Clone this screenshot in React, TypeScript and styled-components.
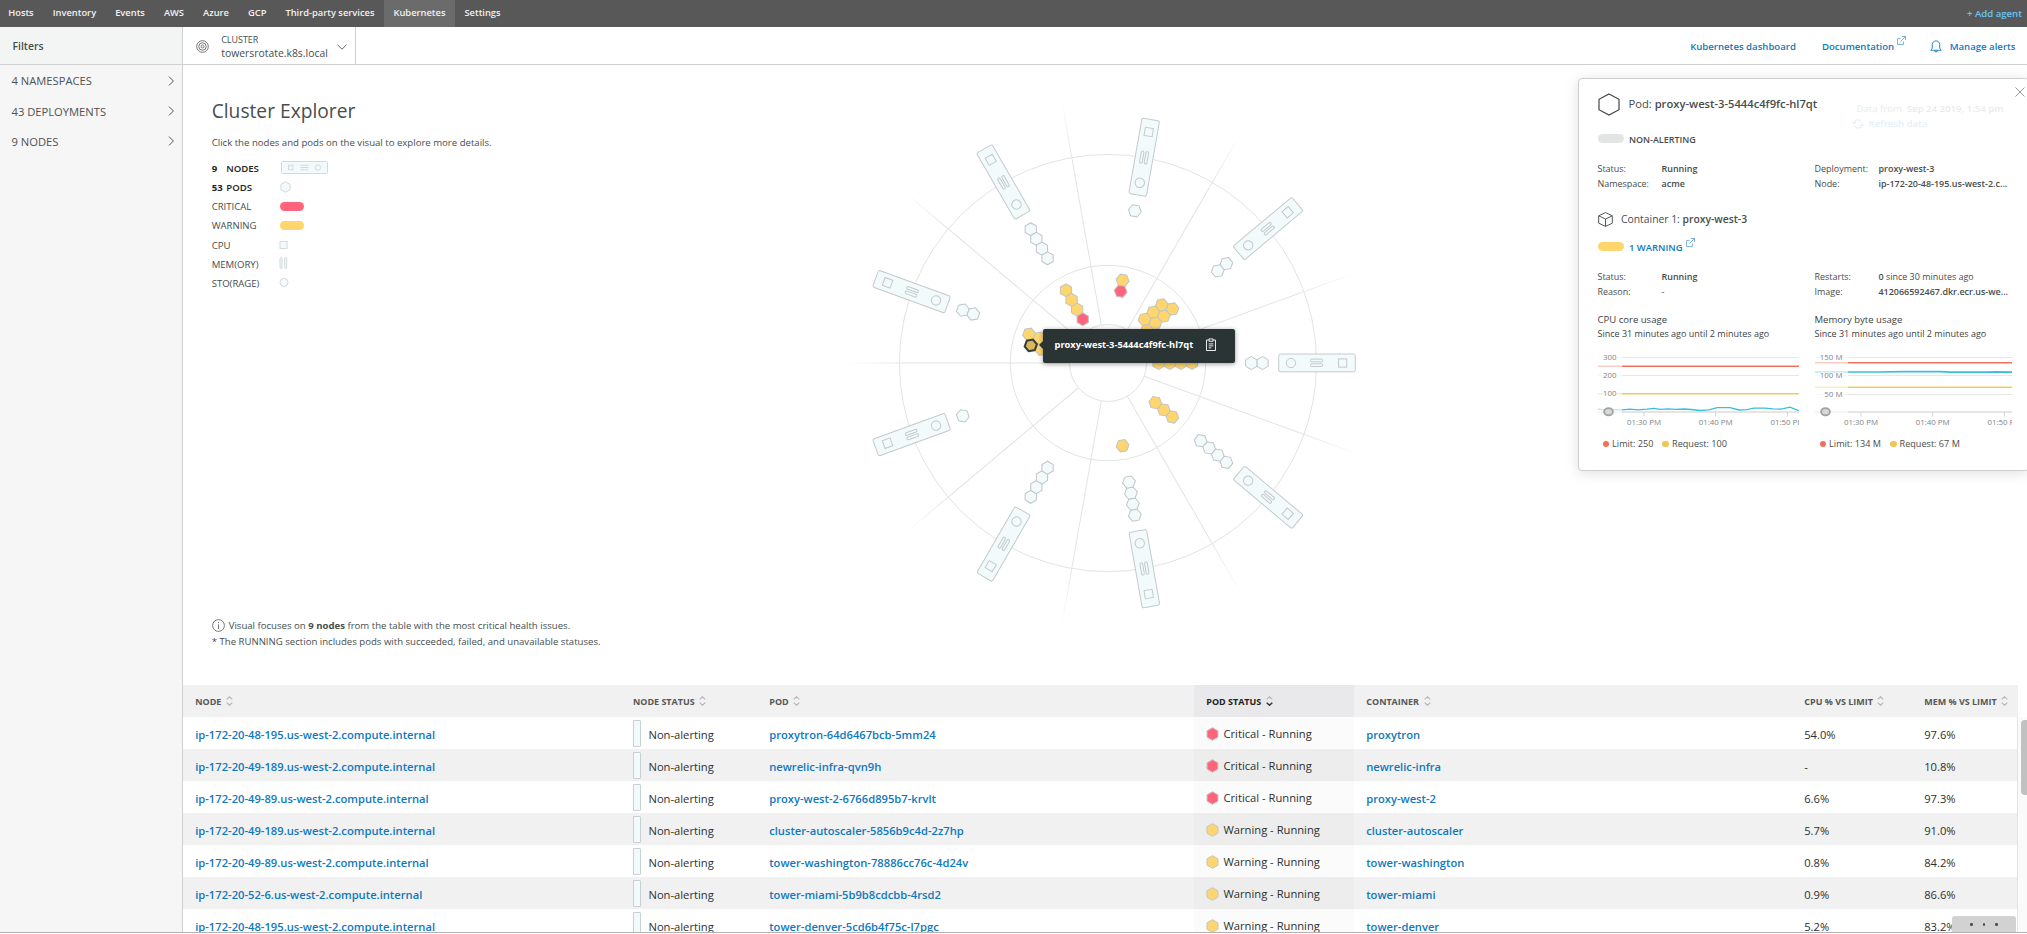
import React from 'react';
import styled, { createGlobalStyle } from 'styled-components';

const GlobalStyle = createGlobalStyle`
  * { box-sizing: border-box; }
  body {
    margin: 0;
    background: #fff;
    color: #464e4e;
    font-family: "Open Sans", sans-serif;
    font-size: 9.6px;
    overflow: hidden;
  }
`;

const LINK = '#0f78bd';
const YELLOW = '#ffd66e';
const RED = '#ff647c';
const SHELL = '#f3fafc';

const Page = styled.div`
  display: flex;
  flex-direction: column;
  width: 2027px;
  height: 933px;
  border-bottom: 1px solid #b2b2b2;
  overflow: hidden;
`;

/* ---------- top navigation ---------- */

const TopNav = styled.nav`
  display: flex;
  flex: none;
  height: 27px;
  background: #585858;
`;

const NavItem = styled.a<{ $active?: boolean }>`
  padding: 0 9.5px 2px;
  line-height: 25px;
  font-size: 9.33px;
  font-weight: 600;
  color: #f2f2f2;
  background: ${(p) => (p.$active ? '#6b6b6b' : 'transparent')};

  &:first-child {
    padding-left: 8.2px;
  }
`;

const AddAgent = styled.a`
  margin-left: auto;
  padding-right: 5px;
  line-height: 27px;
  font-weight: 600;
  color: #6ac4f0;
`;

/* ---------- shell ---------- */

const Shell = styled.div`
  display: flex;
  flex: 1;
  min-height: 0;
`;

const Sidebar = styled.aside`
  flex: none;
  width: 183px;
  background: #f6f6f6;
  border-right: 1px solid #cfcfcf;
`;

const FilterTitle = styled.div`
  height: 38px;
  padding: 1px 0 0 12.5px;
  line-height: 36px;
  font-size: 10.4px;
  font-weight: 600;
  background: #f3f5f5;
  border-bottom: 1px solid #cfcfcf;
`;

const FilterRow = styled.div`
  display: flex;
  align-items: center;
  justify-content: space-between;
  height: 30.4px;
  padding: 1px 7px 0 11.5px;
  font-size: 11.2px;
  color: #4f5252;
`;

const Main = styled.main`
  display: flex;
  flex-direction: column;
  flex: 1;
  min-width: 0;
`;

const SubHeader = styled.header`
  display: flex;
  align-items: center;
  flex: none;
  height: 38px;
  padding-right: 11.5px;
  border-bottom: 1px solid #cfcfcf;
`;

const ClusterPicker = styled.div`
  display: flex;
  align-items: center;
  width: 173px;
  height: 37px;
  padding: 2px 8px 0 12.5px;
  border-right: 1px solid #cfcfcf;
`;

const ClusterText = styled.div`
  flex: 1;
  margin-left: 12.7px;
  line-height: 13.6px;
  font-size: 10.4px;
  white-space: nowrap;
`;

const ClusterLabel = styled.div`
  font-size: 8.95px;
`;

const HeaderLink = styled.a<{ $gap?: number }>`
  display: flex;
  align-items: center;
  margin-left: ${(p) => p.$gap ?? 26}px;
  padding-top: 2px;
  font-weight: 600;
  color: ${LINK};
`;

const Push = styled.div`
  flex: 1;
`;

const HeaderIcon = styled.svg<{ $lift?: number; $left?: number; $right?: number }>`
  flex: none;
  overflow: visible;
  margin: 0 ${(p) => p.$right ?? 0}px ${(p) => p.$lift ?? 0}px ${(p) => p.$left ?? 0}px;
`;

/* ---------- explorer ---------- */

const Explorer = styled.section`
  display: flex;
  flex: none;
  position: relative;
  height: 620px;
`;

const Intro = styled.div`
  display: flex;
  flex-direction: column;
  width: 640px;
  padding: 32px 0 0 28.7px;
`;

const Title = styled.h1`
  margin: 0;
  line-height: 28px;
  font-size: 19.2px;
  font-weight: 400;
`;

const Hint = styled.p`
  margin: 10.5px 0 9px;
  line-height: 14px;
`;

const LegendRow = styled.div<{ $strong?: boolean; $gap?: number }>`
  display: flex;
  align-items: center;
  height: 19px;
  margin-top: ${(p) => p.$gap ?? 0}px;
  font-weight: ${(p) => (p.$strong ? 600 : 400)};
  color: ${(p) => (p.$strong ? '#1c2424' : '#464e4e')};
  letter-spacing: -0.03px;
`;

const LegendCount = styled.span`
  width: 14.6px;
  font-weight: 700;
`;

const LegendName = styled.span<{ $short?: boolean }>`
  width: ${(p) => (p.$short ? 52.9 : 67.5)}px;
`;

const LegendPill = styled.i<{ $color: string }>`
  width: 24px;
  height: 9px;
  margin-left: 1px;
  border-radius: 5px;
  background: ${(p) => p.$color};
`;

const Notes = styled.div`
  margin-top: 325px;
  line-height: 16px;
`;

const NoteLine = styled.div`
  display: flex;
  align-items: center;
  white-space: pre;
`;

const Canvas = styled.div`
  position: relative;
  width: 570px;
  height: 560px;
`;

const Tooltip = styled.div`
  position: absolute;
  left: 220px;
  top: 264px;
  display: flex;
  align-items: center;
  width: 192px;
  height: 34px;
  padding: 0 0 3px 11.5px;
  border-radius: 2px;
  background: #2a3434;
  box-shadow: 0 1px 5px rgba(0, 0, 0, 0.4);
  color: #fff;
  font-size: 9.3px;
  font-weight: 700;

  &::before {
    content: '';
    position: absolute;
    left: -4.5px;
    top: 12px;
    border: 4.5px solid transparent;
    border-left: 0;
    border-right-color: #2a3434;
  }
`;

/* ---------- pod panel ---------- */

const Panel = styled.aside`
  position: absolute;
  right: -2px;
  top: 12.5px;
  width: 451px;
  height: 393px;
  padding: 4.5px 0 0 18.5px;
  border: 1px solid #cfcfcf;
  border-radius: 4px;
  background: #fff;
  box-shadow: 0 2px 14px rgba(0, 0, 0, 0.13);
  font-size: 8.96px;
  color: #484c4c;
`;

const PanelHead = styled.div`
  display: flex;
  align-items: center;
  height: 42px;
  font-size: 11.2px;
`;

const PanelTitle = styled.div`
  margin: -1px 0 0 9px;
  width: 228px;
  white-space: nowrap;
`;

const Fresh = styled.div`
  align-self: flex-start;
  padding-top: 18px;
  font-size: 9.6px;
  line-height: 15px;
  color: #e9ecec;
  white-space: nowrap;
`;

const Refresh = styled.div`
  display: flex;
  align-items: center;
  margin-left: -5px;
  font-weight: 600;
  color: #e5f1f9;
`;

const CloseIcon = styled.svg`
  position: absolute;
  right: 2px;
  top: 7px;
`;

const Badge = styled.div<{ $top: number; $color?: string }>`
  display: flex;
  align-items: center;
  height: 15px;
  margin-top: ${(p) => p.$top}px;
  font-weight: 600;
  color: ${(p) => p.$color ?? 'inherit'};
`;

const BadgePill = styled.i<{ $color: string }>`
  width: 26px;
  height: 9.5px;
  margin: -2px 5.5px 0 0;
  border-radius: 5px;
  background: ${(p) => p.$color};
`;

const Facts = styled.div<{ $top: number }>`
  display: grid;
  grid-template-columns: 64px 153px 64px 136px;
  grid-auto-rows: 15px;
  margin-top: ${(p) => p.$top}px;
  line-height: 15px;
  white-space: nowrap;

  b {
    font-weight: 600;
  }
`;

const ContainerLine = styled.div`
  display: flex;
  align-items: center;
  height: 16px;
  margin-top: 20px;
  font-size: 10.35px;
  white-space: pre;

  svg {
    margin: 2px 8.5px 0 0;
  }
  b {
    font-weight: 600;
  }
`;

const Strong = styled.b`
  font-weight: 600;
`;

const WarningText = styled.span`
  font-size: 9.45px;
`;

const Charts = styled.div`
  display: grid;
  grid-template-columns: 217px 201px;
  margin-top: 14px;
`;

const ChartTitle = styled.div<{ $size: number }>`
  line-height: 14.5px;
  font-size: ${(p) => p.$size}px;
  color: #3c4242;
`;

const ChartSvg = styled.svg`
  display: block;
  margin-top: 8.5px;
  font-size: 7.9px;
`;

const Keys = styled.div`
  display: flex;
  gap: 9px;
  margin: 8.5px 0 0 5px;
  line-height: 14px;
  font-size: 9.1px;
`;

const Key = styled.span<{ $color: string }>`
  display: flex;
  align-items: center;

  &::before {
    content: '';
    width: 6.6px;
    height: 6.6px;
    margin-right: 3px;
    border-radius: 50%;
    background: ${(p) => p.$color};
  }
`;

/* ---------- table ---------- */

const TableArea = styled.section`
  display: flex;
  flex: 1;
  min-height: 0;
  position: relative;
`;

const Table = styled.div`
  width: 1835px;
`;

const Row = styled.div<{ $head?: boolean; $odd?: boolean }>`
  display: grid;
  grid-template-columns: 437.7px 136.3px 437px 160px 438px 120px 106px;
  height: 32px;
  background: ${(p) => (p.$head || p.$odd ? '#f1f1f1' : '#fff')};
`;

const Cell = styled.div<{ $link?: boolean; $sorted?: boolean; $raise?: boolean }>`
  display: flex;
  align-items: center;
  padding: ${(p) => (p.$raise ? 1 : 3)}px 0 0 12.2px;
  white-space: nowrap;
  font-size: 11.2px;
  font-weight: ${(p) => (p.$link ? 600 : 400)};
  color: ${(p) => (p.$link ? LINK : '#2b3030')};
  background: ${(p) => (p.$sorted ? 'rgba(0, 0, 0, 0.016)' : 'transparent')};
`;

const HeadCell = styled.div<{ $sorted?: boolean }>`
  display: flex;
  align-items: center;
  padding-left: 12.3px;
  font-size: 8.98px;
  font-weight: 700;
  color: ${(p) => (p.$sorted ? '#222' : '#545757')};
  background: ${(p) => (p.$sorted ? '#e9e9eb' : 'transparent')};

  svg {
    margin-left: 4.5px;
  }
`;

const NodeChip = styled.i`
  width: 8px;
  height: 27px;
  margin: -2px 7.6px 0 0;
  border: 1px solid #c9d0d2;
  border-radius: 1px;
  background: ${SHELL};
`;

const HexIcon = styled.svg`
  flex: none;
  margin-right: 4.3px;
`;

const Scrollbar = styled.div`
  flex: 1;
  display: flex;
  justify-content: flex-end;
  margin: 32px 0 0 -1px;
  padding-top: 3px;
  border-left: 1px solid #e4e4e4;
  background: #fafafa;
`;

const Thumb = styled.div`
  width: 6px;
  height: 75px;
  border-radius: 4px 0 0 4px;
  background: #c1c1c1;
`;

const More = styled.div`
  position: absolute;
  right: 11px;
  bottom: 0;
  display: flex;
  justify-content: center;
  gap: 9.6px;
  width: 64px;
  height: 16px;
  padding-top: 7.4px;
  border-radius: 3px 3px 0 0;
  background: #d2d2d2;
`;

const Dot = styled.i`
  width: 2.7px;
  height: 2.7px;
  border-radius: 50%;
  background: #505050;
`;

/* ---------- drawings ---------- */

const hexPoints = (cx: number, cy: number, r: number) =>
  [-90, -30, 30, 90, 150, 210]
    .map((a) => `${(cx + r * Math.cos((a * Math.PI) / 180)).toFixed(2)},${(cy + r * Math.sin((a * Math.PI) / 180)).toFixed(2)}`)
    .join(' ');

const Hex = ({ x, y, fill, r = 6.5 }: { x: number; y: number; fill: string; r?: number }) => (
  <polygon points={hexPoints(x, y, r)} fill={fill} stroke="#c0c5c6" strokeWidth="1" />
);

const ExternalIcon = ({ lift, left }: { lift: number; left: number }) => (
  <HeaderIcon $lift={lift} $left={left} width="9" height="9" viewBox="0 0 9 9" fill="none" stroke={LINK} strokeWidth="0.7" opacity="0.8">
    <path d="M3.6 2.6H.6v6h5.8V5.4M5 .5h3.5V4M8.5.5 3.6 5.4" />
  </HeaderIcon>
);

const ChevronRight = () => (
  <svg width="7" height="10" viewBox="0 0 7 10" fill="none" stroke="#555" strokeWidth="1">
    <path d="M1 .6 5.4 5 1 9.4" />
  </svg>
);

const Sort = ({ active }: { active?: boolean }) => (
  <svg width="7" height="10" viewBox="0 0 7 10" fill="none" stroke="#b4b4b4" strokeWidth="1.1">
    <path d="M.7 3.3 3.5.8l2.8 2.5" />
    <path d="M.7 6.7 3.5 9.2l2.8-2.5" stroke={active ? '#333' : '#b4b4b4'} strokeWidth={active ? 1.5 : 1.1} />
  </svg>
);

type Spoke = { angle: number; outer: number; inner: string; second?: string };

/* inner: colours of the alerting pods from the outside in; second: the neighbouring row */
const spokes: Spoke[] = [
  { angle: 0, outer: 2, inner: 'yyyy' },
  { angle: 40, outer: 2, inner: 'yyyy', second: 'yyy' },
  { angle: 80, outer: 1, inner: 'yr' },
  { angle: 120, outer: 4, inner: 'yyyr' },
  { angle: 160, outer: 2, inner: 'yy', second: 'yy' },
  { angle: 200, outer: 1, inner: '' },
  { angle: 240, outer: 4, inner: '' },
  { angle: 280, outer: 4, inner: 'y' },
  { angle: 320, outer: 4, inner: 'yyy' },
];

const tone = (c: string) => (c === 'r' ? RED : YELLOW);

const NodeSpoke = ({ angle, outer, inner, second = '' }: Spoke) => (
  <g transform={`rotate(${-angle})`}>
    <g fill={SHELL} stroke="#c4cacb" strokeWidth="1">
      <rect x="170.7" y="-9" width="76.6" height="17.8" rx="1.8" />
      <circle cx="183" cy="0" r="4.7" />
      <rect x="202.6" y="-3.9" width="12.2" height="2.7" rx="1.3" />
      <rect x="202.6" y="0.8" width="12.2" height="2.7" rx="1.3" />
      <rect x="230.5" y="-4.1" width="8.2" height="8.2" />
    </g>
    {Array.from({ length: outer }, (_, i) => (
      <Hex key={i} x={154.5 - 11.2 * i} y={0} fill={SHELL} />
    ))}
    {inner.split('').map((c, i) => (
      <Hex key={i} x={84 - 11.15 * i} y={0} fill={tone(c)} />
    ))}
    {second.split('').map((c, i) => (
      <Hex key={i} x={78.4 - 11.15 * i} y={-9.9} fill={tone(c)} />
    ))}
  </g>
);

const Radial = () => (
  <svg width="570" height="560" viewBox="823 65 570 560">
    <defs>
      <linearGradient id="fade" gradientUnits="userSpaceOnUse" x1="38" y1="0" x2="266" y2="0">
        <stop offset="0" stopColor="#e2e3e3" />
        <stop offset="0.72" stopColor="#e2e3e3" />
        <stop offset="1" stopColor="#e2e3e3" stopOpacity="0" />
      </linearGradient>
    </defs>
    <g transform="translate(1108 363)" fill="none" stroke="#e2e3e3">
      <circle r="208.6" />
      <circle r="97.7" />
      <circle r="38.5" />
      {spokes.map((s) => (
        <g key={s.angle} transform={`rotate(${-s.angle - 20})`}>
          <path d="M38.5 0H268V.01" stroke="url(#fade)" />
        </g>
      ))}
      {spokes.map((s) => (
        <NodeSpoke key={s.angle} {...s} />
      ))}
      <polygon
        points={hexPoints(0, 0, 6.2)}
        transform="translate(-77.2 -17.6) rotate(20)"
        fill="#dcb757"
        stroke="#37403f"
        strokeWidth="2.1"
      />
    </g>
  </svg>
);

type ChartProps = {
  id: string;
  width: number;
  split: number;
  labelEnd: number;
  grid: [number, string][];
  limit: number;
  request: number;
  line: string;
  thick: number;
  first: number;
};

const Chart = ({ id, width, split, labelEnd, grid, limit, request, line, thick, first }: ChartProps) => {
  const lines = (
    <g fill="none">
      {grid.map(([y]) => (
        <path key={y} d={`M0 ${y}H${width}`} stroke="#e6e7e7" />
      ))}
      <path d={`M0 62H${width}`} stroke="#cbcbcb" strokeWidth="1.2" />
      <path d={`M0 ${limit}H${width}`} stroke="#f5705c" strokeWidth="1.4" />
      <path d={`M0 ${request}H${width}`} stroke="#f2c960" strokeWidth="1.4" />
      <path d={line} stroke="#38bfdf" strokeWidth={thick} />
    </g>
  );
  return (
    <ChartSvg width={width} height="78" viewBox={`0 0 ${width} 78`}>
      <clipPath id={`${id}-a`}>
        <rect width={split} height="78" />
      </clipPath>
      <clipPath id={`${id}-b`}>
        <rect x={split} width={width} height="78" />
      </clipPath>
      <g clipPath={`url(#${id}-a)`} opacity="0.35">{lines}</g>
      <g clipPath={`url(#${id}-b)`}>{lines}</g>
      <g stroke="#fff" strokeWidth="2" strokeOpacity="0.8" paintOrder="stroke" fill="#80858a" textAnchor="end">
        {grid.map(([y, label]) => (
          <text key={y} x={labelEnd} y={y + 2.7}>{label}</text>
        ))}
      </g>
      <ellipse cx="10.5" cy="61.8" rx="4.4" ry="3.6" fill="#d8d8d8" stroke="#a0a0a0" strokeWidth="1.8" />
      <g fill="#80858a" textAnchor="middle">
        {['01:30 PM', '01:40 PM', '01:50 PM'].map((t, i) => (
          <g key={t}>
            <path d={`M${first + i * 71.7} 62v4.5`} stroke="#d3d3d3" />
            <text x={first + i * 71.7} y="75">{t}</text>
          </g>
        ))}
      </g>
    </ChartSvg>
  );
};

const PodPanel = () => (
  <Panel>
    <CloseIcon width="12" height="12" viewBox="0 0 12 12" stroke="#8c8c8c" strokeWidth="0.9">
      <path d="M1.5 1.5l9 9M10.5 1.5l-9 9" />
    </CloseIcon>
    <PanelHead>
      <svg width="22" height="23" viewBox="0 0 22 23" fill="none" stroke="#3f4646" strokeWidth="1.2">
        <path d="M11 1l10 5.3v10.4L11 22 1 16.7V6.3z" />
      </svg>
      <PanelTitle>Pod: <Strong>proxy-west-3-5444c4f9fc-hl7qt</Strong></PanelTitle>
      <Fresh>
        Data from &nbsp;<Strong>Sep 24 2019, 1:54 pm</Strong>
        <Refresh>
          <HeaderIcon $right={5} width="12" height="10" viewBox="0 0 12 10" fill="none" stroke="#dcedf8">
            <path d="M2 4a4 4 0 0 1 7.6-.8M10 6a4 4 0 0 1-7.6.8M.3 3 2 4.8 3.8 3M11.7 7 10 5.2 8.2 7" />
          </HeaderIcon>
          Refresh data
        </Refresh>
      </Fresh>
    </PanelHead>
    <Badge $top={7}><BadgePill $color="#e2e5e4" />NON-ALERTING</Badge>
    <Facts $top={13.5}>
      <span>Status:</span><b>Running</b><span>Deployment:</span><b>proxy-west-3</b>
      <span>Namespace:</span><b>acme</b><span>Node:</span><b>ip-172-20-48-195.us-west-2.c...</b>
    </Facts>
    <ContainerLine>
      <svg width="15" height="15" viewBox="0 0 15 15" fill="none" stroke="#3f4646" strokeWidth="0.9">
        <path d="M7.5.6l6.8 3.2v7.4L7.5 14.4.7 11.2V3.8zM.7 3.8l6.8 3.3 6.8-3.3M7.5 7.1v7.3" />
      </svg>
      {'Container 1: '}<b>proxy-west-3</b>
    </ContainerLine>
    <Badge $top={13.3} $color={LINK}>
      <BadgePill $color={YELLOW} /><WarningText>1 WARNING</WarningText><ExternalIcon lift={10} left={3.5} />
    </Badge>
    <Facts $top={14}>
      <span>Status:</span><b>Running</b><span>Restarts:</span><span><b>0</b> since 30 minutes ago</span>
      <span>Reason:</span><span>-</span><span>Image:</span><b>412066592467.dkr.ecr.us-we...</b>
    </Facts>
    <Charts>
      <div>
        <ChartTitle $size={9.55}>CPU core usage</ChartTitle>
        <ChartTitle $size={9}>Since 31 minutes ago until 2 minutes ago</ChartTitle>
        <Chart
          id="cpu" width={201} split={24} labelEnd={18.5}
          grid={[[7.5, '300'], [25.5, '200'], [43.5, '100']]}
          limit={16.3} request={43.8} thick={1.3} first={46}
          line="M0 59l6 .8 6-.4 12 .4 8-.6 8 .7 9-.7 7-.8 6 1 8-.6 8 .5 8-.3 7 .5 9 1 9-.6 8-2.2h13l9 2.3 8-.4 7-1.5h11l8 .8 8 .2 9-2 8 3.2 8-1.600"
        />
        <Keys><Key $color="#f36f5c">Limit: 250</Key><Key $color="#efc558">Request: 100</Key></Keys>
      </div>
      <div>
        <ChartTitle $size={9.55}>Memory byte usage</ChartTitle>
        <ChartTitle $size={9}>Since 31 minutes ago until 2 minutes ago</ChartTitle>
        <Chart
          id="mem" width={197} split={33} labelEnd={27.5}
          grid={[[7.5, '150 M'], [25.5, '100 M'], [44.5, '50 M']]}
          limit={12.7} request={37.3} thick={1.7} first={46}
          line="M0 22H60l30-.3h35l10 .5h35l12-.3 15 .3"
        />
        <Keys><Key $color="#f36f5c">Limit: 134 M</Key><Key $color="#efc558">Request: 67 M</Key></Keys>
      </div>
    </Charts>
  </Panel>
);

const rows = [
  ['48-195', 'proxytron-64d6467bcb-5mm24', 'Critical', 'proxytron', '54.0%', '97.6%'],
  ['49-189', 'newrelic-infra-qvn9h', 'Critical', 'newrelic-infra', '-', '10.8%'],
  ['49-89', 'proxy-west-2-6766d895b7-krvlt', 'Critical', 'proxy-west-2', '6.6%', '97.3%'],
  ['49-189', 'cluster-autoscaler-5856b9c4d-2z7hp', 'Warning', 'cluster-autoscaler', '5.7%', '91.0%'],
  ['49-89', 'tower-washington-78886cc76c-4d24v', 'Warning', 'tower-washington', '0.8%', '84.2%'],
  ['52-6', 'tower-miami-5b9b8cdcbb-4rsd2', 'Warning', 'tower-miami', '0.9%', '86.6%'],
  ['48-195', 'tower-denver-5cd6b4f75c-l7pgc', 'Warning', 'tower-denver', '5.2%', '83.2%'],
];

const navItems = ['Hosts', 'Inventory', 'Events', 'AWS', 'Azure', 'GCP', 'Third-party services', 'Kubernetes', 'Settings'];
const headings = ['NODE', 'NODE STATUS', 'POD', 'POD STATUS', 'CONTAINER', 'CPU % VS LIMIT', 'MEM % VS LIMIT'];

export default function App() {
  return (
    <Page>
      <GlobalStyle />
      <TopNav>
        {navItems.map((n) => (
          <NavItem key={n} $active={n === 'Kubernetes'}>{n}</NavItem>
        ))}
        <AddAgent>+ Add agent</AddAgent>
      </TopNav>
      <Shell>
        <Sidebar>
          <FilterTitle>Filters</FilterTitle>
          {['4 NAMESPACES', '43 DEPLOYMENTS', '9 NODES'].map((f) => (
            <FilterRow key={f}>{f}<ChevronRight /></FilterRow>
          ))}
        </Sidebar>
        <Main>
          <SubHeader>
            <ClusterPicker>
              <svg width="13" height="13" viewBox="0 0 13 13" fill="none" stroke="#555" strokeWidth="0.8">
                <circle cx="6.5" cy="6.5" r="5.8" />
                <circle cx="6.5" cy="6.5" r="3.7" />
                <circle cx="6.5" cy="6.5" r="1.5" />
              </svg>
              <ClusterText>
                <ClusterLabel>CLUSTER</ClusterLabel>
                towersrotate.k8s.local
              </ClusterText>
              <svg width="10" height="6" viewBox="0 0 10 6" fill="none" stroke="#555" strokeWidth="0.9">
                <path d="M.5.8 5 5.2 9.5.8" />
              </svg>
            </ClusterPicker>
            <Push />
            <HeaderLink>Kubernetes dashboard</HeaderLink>
            <HeaderLink>Documentation<ExternalIcon lift={13} left={3} /></HeaderLink>
            <HeaderLink $gap={24}>
              <HeaderIcon $right={7.5} width="12" height="13" viewBox="0 0 12 13" fill="none" stroke={LINK} strokeWidth="0.9">
                <path d="M.7 10.3h10.6c-1-1-1.6-1.8-1.6-3.3V4.6C9.7 2.5 8 .9 6 .9S2.300 2.5 2.300 4.6V7c0 1.5-.6 2.300-1.6 3.300zM4.600 10.5a1.400 1.400 0 0 0 2.800 0" />
              </HeaderIcon>
              Manage alerts
            </HeaderLink>
          </SubHeader>
          <Explorer>
            <Intro>
              <Title>Cluster Explorer</Title>
              <Hint>Click the nodes and pods on the visual to explore more details.</Hint>
              <LegendRow $strong>
                <LegendCount>9</LegendCount><LegendName $short>NODES</LegendName>
                <HeaderIcon $left={1.5} $lift={1} width="47" height="13" viewBox="0 0 47 13" fill={SHELL} stroke="#d3dadb">
                  <rect x="0.5" y="0.5" width="46" height="12" rx="1" />
                  <rect x="7.5" y="4.3" width="4.4" height="4.4" />
                  <path d="M19.5 4.3h8M19.5 6.5h8M19.5 8.7h8" strokeWidth="1.1" />
                  <circle cx="37" cy="6.5" r="2.7" />
                </HeaderIcon>
              </LegendRow>
              <LegendRow $strong>
                <LegendCount>53</LegendCount><LegendName $short>PODS</LegendName>
                <HeaderIcon $left={1} width="11" height="12" viewBox="0 0 11 12">
                  <polygon points={hexPoints(5.5, 6, 5.3)} fill={SHELL} stroke="#d3dadb" />
                </HeaderIcon>
              </LegendRow>
              <LegendRow><LegendName>CRITICAL</LegendName><LegendPill $color={RED} /></LegendRow>
              <LegendRow><LegendName>WARNING</LegendName><LegendPill $color={YELLOW} /></LegendRow>
              <LegendRow $gap={1}>
                <LegendName>CPU</LegendName>
                <svg width="9" height="8" viewBox="0 0 9 8"><rect x="1" y="0.5" width="7" height="7" fill={SHELL} stroke="#d3dadb" /></svg>
              </LegendRow>
              <LegendRow>
                <LegendName>MEM(ORY)</LegendName>
                <HeaderIcon $lift={2} width="9" height="12" viewBox="0 0 9 12" fill={SHELL} stroke="#d3dadb">
                  <rect x="1" y="0.5" width="2" height="11" rx="0.8" />
                  <rect x="5.7" y="0.5" width="2" height="11" rx="0.8" />
                </HeaderIcon>
              </LegendRow>
              <LegendRow>
                <LegendName>STO(RAGE)</LegendName>
                <HeaderIcon $lift={1} width="10" height="9" viewBox="0 0 10 9"><circle cx="5" cy="4.5" r="4" fill={SHELL} stroke="#d3dadb" /></HeaderIcon>
              </LegendRow>
              <Notes>
                <NoteLine>
                  <HeaderIcon $right={4} width="13" height="13" viewBox="0 0 13 13" fill="none" stroke="#555" strokeWidth="0.8">
                    <circle cx="6.5" cy="6.5" r="5.9" />
                    <path d="M6.5 5.3V10M6.5 3v1.1" />
                  </HeaderIcon>
                  Visual focuses on <b>9 nodes</b> from the table with the most critical health issues.
                </NoteLine>
                <NoteLine>* The RUNNING section includes pods with succeeded, failed, and unavailable statuses.</NoteLine>
              </Notes>
            </Intro>
            <Canvas>
              <Radial />
              <Tooltip>
                proxy-west-3-5444c4f9fc-hl7qt
                <HeaderIcon $left={12.5} width="10" height="13" viewBox="0 0 10 13" fill="none" stroke="#fff" strokeWidth="0.9">
                  <path d="M3 2H.5v10.5h9V2H7M3 .9h4v2.4H3zM2.7 5.9h4.6M2.7 7.9h4.6M2.7 9.9h2.6" />
                </HeaderIcon>
              </Tooltip>
            </Canvas>
            <PodPanel />
          </Explorer>
          <TableArea>
            <Table>
              <Row $head>
                {headings.map((h) => (
                  <HeadCell key={h} $sorted={h === 'POD STATUS'}>{h}<Sort active={h === 'POD STATUS'} /></HeadCell>
                ))}
              </Row>
              {rows.map(([node, pod, level, container, cpu, mem], i) => (
                <Row key={pod} $odd={i % 2 === 1}>
                  <Cell $link>ip-172-20-{node}.us-west-2.compute.internal</Cell>
                  <Cell><NodeChip />Non-alerting</Cell>
                  <Cell $link>{pod}</Cell>
                  <Cell $sorted $raise>
                    <HexIcon width="13" height="14" viewBox="0 0 13 14">
                      <Hex x={6.5} y={7} r={6.3} fill={level === 'Critical' ? RED : YELLOW} />
                    </HexIcon>
                    {level} - Running
                  </Cell>
                  <Cell $link>{container}</Cell>
                  <Cell>{cpu}</Cell>
                  <Cell>{mem}</Cell>
                </Row>
              ))}
            </Table>
            <Scrollbar><Thumb /></Scrollbar>
            <More><Dot /><Dot /><Dot /></More>
          </TableArea>
        </Main>
      </Shell>
    </Page>
  );
}
